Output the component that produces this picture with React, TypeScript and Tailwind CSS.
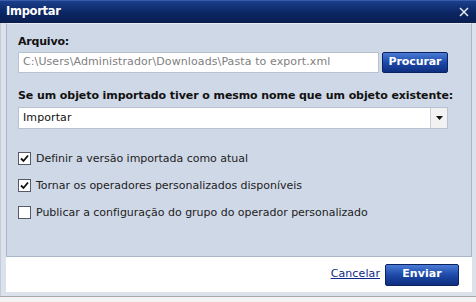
import React from "react";

function Check({ checked }: { checked: boolean }) {
  return (
    <div className="w-[13px] h-[13px] bg-white border border-[#555b66] flex items-center justify-center shrink-0">
      {checked && (
        <svg width="9" height="9" viewBox="0 0 9 9">
          <path d="M1 4.5 L3.5 7 L8 1.5" fill="none" stroke="#111" strokeWidth="1.8" />
        </svg>
      )}
    </div>
  );
}

export default function App() {
  const font = "font-['DejaVu_Sans',Tahoma,Verdana,sans-serif]";
  return (
    <div className={`w-[476px] h-[302px] bg-[#f3f3f3] overflow-hidden ${font}`}>
      {/* title bar */}
      <div className="h-[23px] bg-gradient-to-b from-[#1c3f8c] via-[#0b2766] to-[#0a1d4e] flex items-center justify-between pl-[6px] pr-[6px] border-t border-[#3a5ba8]">
        <span className="text-white font-bold text-[11.5px] leading-none tracking-[-0.3px]">Importar</span>
        <svg width="10" height="10" viewBox="0 0 10 10" className="mr-[1px]">
          <path d="M1 1 L9 9 M9 1 L1 9" stroke="#e8ecf4" strokeWidth="1.5" />
        </svg>
      </div>
      {/* body */}
      <div className="bg-[#dbe2ec] pl-[5px] pr-[4px] pb-[4px] border-l border-[#c4ccd8]">
        <div className="h-[234px] bg-[#cfd8e7] border border-[#a9b5c9] border-t-[#e6ebf2] pl-[11px] pr-[22px] flex flex-col">
          <div className="mt-[11px] text-[11px] leading-[13px] font-bold text-[#111] tracking-[-0.2px]">Arquivo:</div>
          <div className="mt-[4px] flex items-center gap-[3px]">
            <div className="w-[361px] h-[21px] bg-white border border-[#b9c2d0] flex items-center pl-[4px] text-[11px] text-[#808080] whitespace-nowrap overflow-hidden tracking-[0.1px]">
              C:\Users\Administrador\Downloads\Pasta to export.xml
            </div>
            <div className="w-[66px] h-[21px] rounded-[2px] border border-[#0b2260] bg-gradient-to-b from-[#4a7bd6] via-[#1d49a8] to-[#0e2f7f] flex items-center justify-center text-white font-bold text-[11px] tracking-[-0.1px]">
              Procurar
            </div>
          </div>
          <div className="mt-[16px] text-[11px] leading-[13px] font-bold text-[#111] tracking-[-0.08px] whitespace-nowrap">
            Se um objeto importado tiver o mesmo nome que um objeto existente:
          </div>
          <div className="mt-[5px] w-[430px] h-[22px] bg-white border border-[#b9c2d0] flex">
            <div className="flex-1 flex items-center pl-[4px] text-[11px] text-[#111] tracking-[0.1px]">Importar</div>
            <div className="w-[17px] border-l border-[#c8ced8] bg-[#f2f2f2] flex items-center justify-center">
              <svg width="7" height="4" viewBox="0 0 7 4">
                <path d="M0 0 H7 L3.5 4 Z" fill="#111" />
              </svg>
            </div>
          </div>
          <div className="mt-[23px] flex flex-col gap-[14px] text-[11px] leading-[13px] text-[#222] tracking-[-0.02px]">
            <div className="flex items-center gap-[5px]">
              <Check checked />
              <span>Definir a versão importada como atual</span>
            </div>
            <div className="flex items-center gap-[5px]">
              <Check checked />
              <span>Tornar os operadores personalizados disponíveis</span>
            </div>
            <div className="flex items-center gap-[5px]">
              <Check checked={false} />
              <span>Publicar a configuração do grupo do operador personalizado</span>
            </div>
          </div>
        </div>
        <div className="h-[35px] bg-white flex items-center justify-end pr-[13px] gap-[5px]">
          <span className="text-[11px] text-[#0d2a8a] underline tracking-[0.1px]">Cancelar</span>
          <div className="w-[74px] h-[22px] rounded-[2px] border border-[#0b2260] bg-gradient-to-b from-[#4a7bd6] via-[#1d49a8] to-[#0e2f7f] flex items-center justify-center text-white font-bold text-[11px] tracking-[0.1px]">
            Enviar
          </div>
        </div>
      </div>
      <div className="h-px bg-[#a8a8a8]" />
    </div>
  );
}
